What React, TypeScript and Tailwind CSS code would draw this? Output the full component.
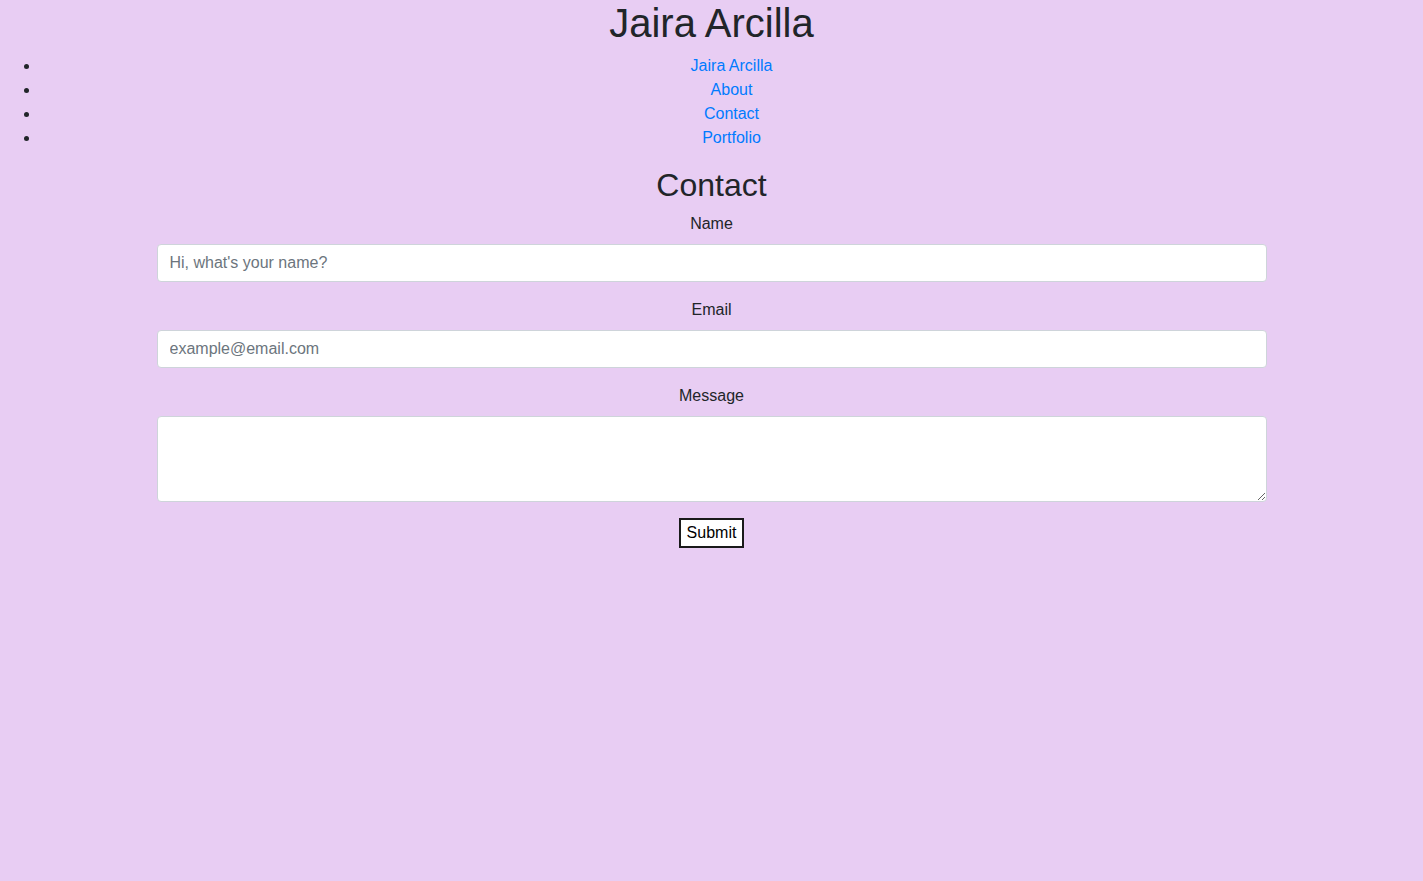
import React from 'react';

const links = ['Jaira Arcilla', 'About', 'Contact', 'Portfolio'];

export default function App() {
  return (
    <div className="min-h-screen bg-[#e8cdf3] text-[#212529] font-['Liberation_Sans',Arial,sans-serif] text-base leading-6">
      <h1 className="text-center text-[40px] leading-[46px] mb-2">Jaira Arcilla</h1>
      <ul className="list-disc pl-10 mb-4">
        {links.map((l) => (
          <li key={l} className="text-center">
            <a href="#" className="text-[#007bff]">
              {l}
            </a>
          </li>
        ))}
      </ul>

      <div className="mx-auto max-w-[1140px] px-[15px]">
        <h2 className="text-center text-[32px] leading-[38px] mb-2">Contact</h2>
        <form className="flex flex-col">
          <div className="mb-4 flex flex-col">
            <label className="text-center mb-2">Name</label>
            <input
              type="text"
              placeholder="Hi, what's your name?"
              className="h-[38px] w-full rounded border border-[#ced4da] bg-white px-3 py-1.5 text-base placeholder:text-[#6c757d]"
            />
          </div>
          <div className="mb-4 flex flex-col">
            <label className="text-center mb-2">Email</label>
            <input
              type="email"
              placeholder="example@email.com"
              className="h-[38px] w-full rounded border border-[#ced4da] bg-white px-3 py-1.5 text-base placeholder:text-[#6c757d]"
            />
          </div>
          <div className="mb-4 flex flex-col">
            <label className="text-center mb-2">Message</label>
            <textarea className="block h-[86px] w-full rounded border border-[#ced4da] bg-white px-3 py-1.5 text-base" />
          </div>
          <div className="flex justify-center">
            <button
              type="button"
              className="border-2 border-[#1a1a1a] bg-white px-[6px] py-[1px] text-base leading-6 text-black"
            >
              Submit
            </button>
          </div>
        </form>
      </div>
    </div>
  );
}
